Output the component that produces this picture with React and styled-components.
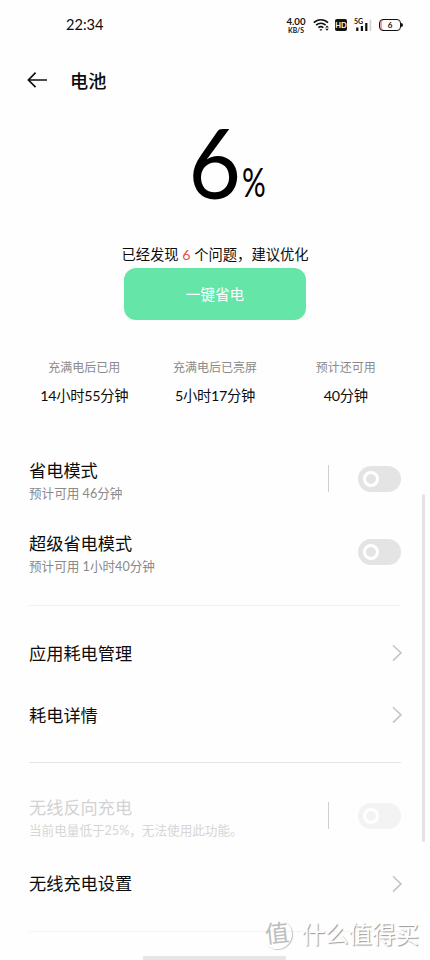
import React from 'react'
import styled, { createGlobalStyle } from 'styled-components'

const GlobalStyle = createGlobalStyle`
    *, *::before, *::after {
        box-sizing: border-box;
    }
    body {
        margin: 0;
        background: #fefefe;
        color: #0c0c0c;
        font-family: Lato, "Noto Sans CJK SC", sans-serif;
    }
`

const stats = [
    { label: '充满电后已用', value: '14小时55分钟' },
    { label: '充满电后已亮屏', value: '5小时17分钟' },
    { label: '预计还可用', value: '40分钟' },
]

function StatusIcons() {
    return (
        <Indicators>
            <Speed>
                <b>4.00</b>
                <small>KB/S</small>
            </Speed>
            <svg width="17" height="14" viewBox="0 0 17 14" fill="none" stroke="#111" strokeWidth="1.6">
                <path d="M0.8 4.6C4.8 0.7 11 0.7 15 4.6" />
                <path d="M3.1 7.2C5.9 4.6 9.9 4.6 12.6 7.2" />
                <path d="M5.4 9.7C6.9 8.4 8.8 8.4 10.3 9.7" />
                <path d="M6.4 11.2h3l-1.5 1.7z" fill="#111" stroke="none" />
                <path d="M12.2 9.4l1.8-2 1.8 2zM12.2 10.8l1.8 2 1.8-2z" fill="#111" stroke="none" />
            </svg>
            <HdBadge>HD</HdBadge>
            <Signal>
                <span>5G</span>
                <svg width="18" height="14" viewBox="0 0 18 14">
                    <rect x="2.2" y="9.5" width="2.2" height="3.5" fill="#111" />
                    <rect x="6.8" y="8" width="2.2" height="5" fill="#111" />
                    <rect x="11.2" y="5" width="2.2" height="8" fill="#111" />
                    <rect x="15.6" y="1.5" width="1.6" height="11.5" fill="#d2d2d2" />
                </svg>
            </Signal>
            <Battery>6</Battery>
        </Indicators>
    )
}

function SettingRow({ title, note, split, toggle, disabled, height }) {
    return (
        <Row $height={height}>
            <RowText $disabled={disabled} $top={note ? 4 : 1}>
                <h2>{title}</h2>
                {note && <p>{note}</p>}
            </RowText>
            {split && <Split />}
            {toggle ? (
                <Toggle $disabled={disabled} />
            ) : (
                <Chevron width="10" height="18" viewBox="0 0 10 18">
                    <path d="M1 1.2L9 8.9L1 16.6" />
                </Chevron>
            )}
        </Row>
    )
}

export default function App() {
    return (
        <Screen>
            <GlobalStyle />
            <StatusBar>
                <Clock>22:34</Clock>
                <StatusIcons />
            </StatusBar>
            <Header>
                <svg width="21" height="18" viewBox="0 0 21 18" fill="none" stroke="#111" strokeWidth="1.7">
                    <path d="M20 9H1.8M8.6 1.6L1.4 9l7.2 7.2" />
                </svg>
                <h1>电池</h1>
            </Header>
            <Level>
                <Digit>6</Digit>
                <Percent>%</Percent>
            </Level>
            <Advice>
                已经发现 <em>6</em> 个问题，建议优化
            </Advice>
            <SaveButton>一键省电</SaveButton>
            <Stats>
                {stats.map((item) => (
                    <Stat key={item.label}>
                        <dt>{item.label}</dt>
                        <dd>{item.value}</dd>
                    </Stat>
                ))}
            </Stats>
            <List>
                <SettingRow title="省电模式" note="预计可用 46分钟" split toggle height={73} />
                <SettingRow title="超级省电模式" note="预计可用 1小时40分钟" toggle height={73} />
                <Divider $color="#f1f1f1" $top={17} $bottom={16} />
                <SettingRow title="应用耗电管理" height={62} />
                <SettingRow title="耗电详情" height={62} />
                <Divider $color="#e5e5e5" $top={16} $bottom={16} />
                <SettingRow title="无线反向充电" note="当前电量低于25%，无法使用此功能。" split toggle disabled height={73} />
                <SettingRow title="无线充电设置" height={63} />
                <Divider $color="#f3f3f3" $top={16} $bottom={0} />
            </List>
            <Scrollbar />
            <HomeBar />
            <Watermark>
                <Seal>值</Seal>
                <span>什么值得买</span>
            </Watermark>
        </Screen>
    )
}

const Screen = styled.div`
    position: relative;
    width: 430px;
    height: 960px;
    overflow: hidden;
    background: #fefefe;
`

const StatusBar = styled.div`
    display: flex;
    align-items: center;
    justify-content: space-between;
    height: 49px;
    padding: 1px 27px 0 66px;
`

const Clock = styled.span`
    font-size: 14.6px;
    line-height: 20px;
`

const Indicators = styled.div`
    display: flex;
    align-items: center;
    color: #111;
`

const Speed = styled.div`
    display: flex;
    flex-direction: column;
    align-items: center;
    width: 22px;
    margin-right: 6px;
    b {
        font-size: 9.6px;
        line-height: 9px;
    }
    small {
        font-size: 6.8px;
        font-weight: 700;
        line-height: 8px;
    }
`

const HdBadge = styled.span`
    width: 12px;
    height: 12px;
    margin: 0 7px 0 5px;
    border-radius: 2px;
    background: #111;
    color: #fff;
    font-size: 7.5px;
    font-weight: 700;
    line-height: 13px;
    text-align: center;
`

const Signal = styled.div`
    position: relative;
    display: flex;
    margin-right: 7px;
    span {
        position: absolute;
        top: 0;
        left: 0;
        font-size: 7px;
        font-weight: 700;
        line-height: 7px;
    }
`

const Battery = styled.div`
    position: relative;
    width: 22px;
    height: 12px;
    margin-right: 2px;
    border: 1.5px solid #111;
    border-radius: 4px;
    box-shadow: inset 2px 0 0 #f0a0a0;
    font-size: 8px;
    font-weight: 700;
    line-height: 10px;
    text-align: center;
    &::after {
        content: '';
        position: absolute;
        top: 3px;
        right: -3px;
        width: 2px;
        height: 4px;
        border-radius: 0 2px 2px 0;
        background: #111;
    }
`

const Header = styled.header`
    display: flex;
    align-items: center;
    height: 62px;
    padding-left: 27px;
    h1 {
        margin: 1px 0 0 22px;
        font-size: 18.2px;
        font-weight: 500;
        line-height: 26px;
    }
`

const Level = styled.div`
    display: flex;
    align-items: baseline;
    height: 134px;
    padding-left: 188px;
    color: #000;
    line-height: 102px;
`

const Digit = styled.span`
    width: 54px;
    font-size: 96px;
    transform: scaleX(0.95);
    transform-origin: 4px 0;
`

const Percent = styled.span`
    font-size: 40px;
    line-height: 40px;
    transform: translateY(-2px) scaleX(0.74);
    transform-origin: left;
`

const Advice = styled.p`
    margin: 0;
    font-size: 14.3px;
    line-height: 20px;
    text-align: center;
    white-space: nowrap;
    em {
        color: #e2504c;
        font-style: normal;
    }
`

const SaveButton = styled.button`
    display: block;
    width: 182px;
    height: 52px;
    margin: 3px auto 0 124px;
    padding: 1px 0 0;
    border: 0;
    border-radius: 12px;
    background: #65e6a8;
    color: #fff;
    font: 400 14.6px/51px Lato, "Noto Sans CJK SC", sans-serif;
`

const Stats = styled.dl`
    display: grid;
    grid-template-columns: repeat(3, 1fr);
    height: 122px;
    margin: 0;
    padding: 38px 19px 0;
    text-align: center;
`

const Stat = styled.div`
    dt {
        color: #8a8a8a;
        font-size: 12px;
        line-height: 20px;
    }
    dd {
        margin: 8px 0 0;
        font-size: 14.3px;
        letter-spacing: -0.3px;
        line-height: 20px;
    }
`

const List = styled.main`
    padding: 0 29px;
`

const Row = styled.div`
    display: flex;
    align-items: center;
    height: ${(props) => props.$height}px;
`

const RowText = styled.div`
    flex: 1;
    padding-top: ${(props) => props.$top}px;
    color: ${(props) => (props.$disabled ? '#d2d2d2' : '#0c0c0c')};
    h2 {
        margin: 0;
        font-size: 17.2px;
        font-weight: 400;
        line-height: 26px;
    }
    p {
        margin: 0;
        color: ${(props) => (props.$disabled ? '#d6d6d6' : '#8a8a8a')};
        font-size: 12.6px;
        line-height: 20px;
    }
`

const Chevron = styled.svg`
    margin-right: -1px;
    fill: none;
    stroke: #c4c4c4;
    stroke-width: 1.5;
`

const Split = styled.i`
    width: 1px;
    height: 27px;
    margin-right: 29px;
    background: #cfcfcf;
`

const Toggle = styled.span`
    display: flex;
    align-items: center;
    width: 43px;
    height: 26px;
    padding-left: 5px;
    border-radius: 13px;
    background: ${(props) => (props.$disabled ? '#f3f3f3' : '#e4e4e4')};
    &::before {
        content: '';
        width: 16px;
        height: 16px;
        border: 3px solid #fff;
        border-radius: 50%;
    }
`

const Divider = styled.hr`
    height: 1px;
    margin: ${(props) => props.$top}px 0 ${(props) => props.$bottom}px;
    border: 0;
    background: ${(props) => props.$color};
`

const Scrollbar = styled.div`
    position: absolute;
    top: 494px;
    right: 5px;
    width: 3px;
    height: 348px;
    border-radius: 2px;
    background: #e3e3e3;
`

const HomeBar = styled.div`
    position: absolute;
    bottom: 0;
    left: 143px;
    width: 143px;
    height: 4px;
    background: #e6e6e6;
`

const Watermark = styled.div`
    position: absolute;
    right: 11px;
    bottom: 10px;
    display: flex;
    align-items: center;
    gap: 10px;
    color: #fff;
    font-size: 23.5px;
    line-height: 32px;
    text-shadow: 1px 1px 1px #999;
    white-space: nowrap;
`

const Seal = styled.span`
    width: 30px;
    height: 30px;
    border-radius: 50%;
    box-shadow: 1px 1px 1px #c4c4c4;
    color: #bdbdbd;
    font-size: 24px;
    font-weight: 400;
    line-height: 27px;
    text-align: center;
    text-shadow: none;
    transform: rotate(-6deg);
`
